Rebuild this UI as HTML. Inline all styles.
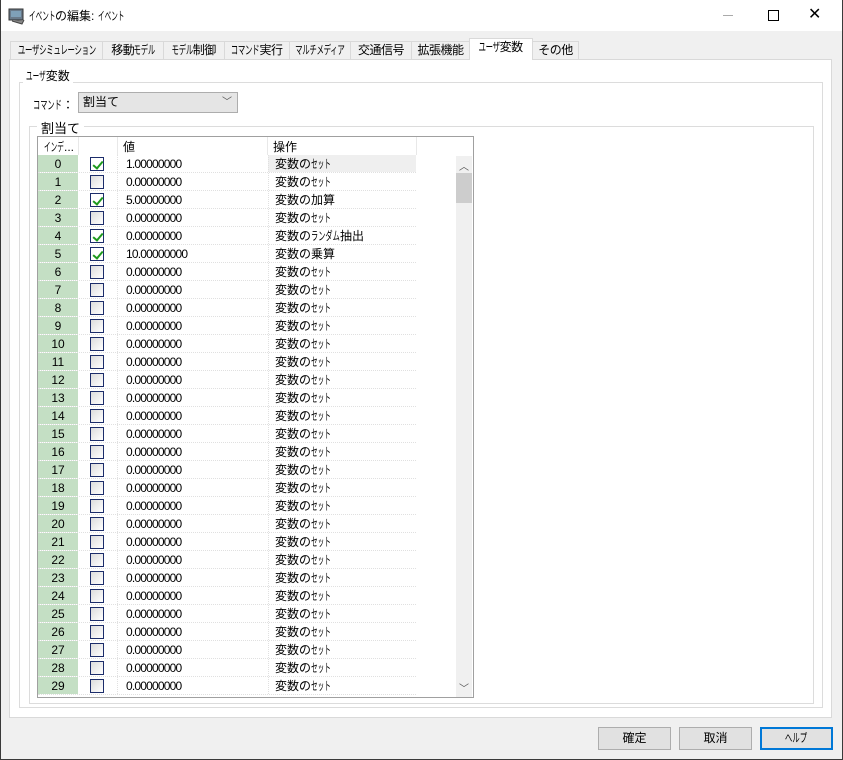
<!DOCTYPE html>
<html><head><meta charset="utf-8"><style>
*{margin:0;padding:0;box-sizing:border-box}
body{width:843px;height:760px;background:#f0f0f0;font-family:"Liberation Sans","Noto Sans CJK JP",sans-serif;font-size:12px;color:#000;position:relative;overflow:hidden}
.a{position:absolute}
#win{left:0;top:0;width:843px;height:760px;border:1px solid #3a3a3a;border-top:none}
#title{left:1px;top:0;width:841px;height:31px;background:#fff}
.tab{position:absolute;top:41px;height:19px;border:1px solid #d9d9d9;border-bottom:none;background:#f0f0f0;text-align:center;line-height:17px;font-size:12px;letter-spacing:-0.5px;white-space:nowrap}
.tab.sel{top:38px;height:22px;background:#fff;z-index:2}
.box{position:absolute;border:1px solid #dcdcdc}
.row{position:absolute;left:38px;width:378px;height:18px;border-bottom:1px dotted #e0e0e0}
.idx{position:absolute;left:0;top:0;width:40px;height:17px;background:#c4dfc4;text-align:center;line-height:19px}
.cb{position:absolute;left:52px;top:2px;width:14px;height:14px;border:1px solid #1c2d6b;background:linear-gradient(135deg,#dcdcdc,#fff)}
.cb.on{background:#fff}
.cb.on:after{content:"";position:absolute;left:4px;top:1px;width:4px;height:8px;border-right:2px solid #1e9a1e;border-bottom:2px solid #1e9a1e;transform:rotate(40deg)}
.val{position:absolute;left:88px;top:0;line-height:19px;letter-spacing:-0.8px}
.op{position:absolute;left:230px;top:0;width:148px;height:17px;line-height:19px;padding-left:6px;border-left:1px dotted #e0e0e0;white-space:nowrap}
.h{display:inline-block;transform:scaleX(.55);transform-origin:0 0;margin-right:-16px}
.h4{display:inline-block;transform:scaleX(.6);transform-origin:0 0;margin-right:-19px}
.vsep{position:absolute;top:0;height:17px;border-left:1px dotted #e0e0e0}
.btn{position:absolute;top:727px;width:73px;height:23px;border:1px solid #adadad;background:#e1e1e1;text-align:center;line-height:21px}
.sx{display:inline-block;transform:scaleX(.62);transform-origin:50% 0;white-space:nowrap}
</style></head><body>
<div class="a" id="win"></div>
<div class="a" id="title"></div>
<svg class="a" style="left:8px;top:7px" width="18" height="18"><rect x="1" y="2" width="14" height="11" fill="#6a7a8a" stroke="#333"/><rect x="3" y="4" width="10" height="6" fill="#7fa0b8"/><path d="M4 14 L14 17 L16 13" stroke="#444" fill="#888"/></svg>
<div class="a" style="left:29px;top:7px;font-size:12px;white-space:nowrap"><span style="display:inline-block;transform:scaleX(.55);transform-origin:0 0;margin-right:-22px">イベント</span>の編集: <span style="display:inline-block;transform:scaleX(.55);transform-origin:0 0">イベント</span></div>
<div class="a" style="left:723px;top:15px;width:10px;height:1px;background:#aaa"></div>
<div class="a" style="left:768px;top:10px;width:11px;height:11px;border:1px solid #000"></div>
<div class="a" style="left:808px;top:6px;font-size:16px;line-height:18px">✕</div>

<div class="tab" style="left:10px;width:93px"><span class="sx" style="margin:0 -30px">ユーザシミュレーション</span></div>
<div class="tab" style="left:102px;width:62px">移動<span class="sx" style="margin:0 -7px">モデル</span></div>
<div class="tab" style="left:163px;width:62px"><span class="sx" style="margin:0 -7px">モデル</span>制御</div>
<div class="tab" style="left:224px;width:66px"><span class="sx" style="margin:0 -9px">コマンド</span>実行</div>
<div class="tab" style="left:289px;width:62px"><span class="sx" style="margin:0 -20px">マルチメディア</span></div>
<div class="tab" style="left:350px;width:62px">交通信号</div>
<div class="tab" style="left:411px;width:59px">拡張機能</div>
<div class="tab sel" style="left:469px;width:64px"><span class="sx" style="margin:0 -7px">ユーザ</span>変数</div>
<div class="tab" style="left:532px;width:47px">その他</div>

<div class="box" style="left:9px;top:59px;width:823px;height:659px;background:#fff;border-color:#d9d9d9"></div>
<div class="box" style="left:19px;top:82px;width:804px;height:626px"></div>
<div class="a" style="left:23px;top:67px;background:#fff;padding:0 3px;white-space:nowrap"><span class="h">ユーザ</span>変数</div>
<div class="a" style="left:33px;top:96px;white-space:nowrap"><span class="h4">コマンド</span>：</div>
<div class="a" style="left:78px;top:92px;width:160px;height:21px;border:1px solid #adadad;background:#e5e5e5;padding-left:4px;line-height:19px">割当て<span style="position:absolute;right:5px;top:0;font-size:10px;color:#555">﹀</span></div>
<div class="box" style="left:29px;top:126px;width:785px;height:578px"></div>
<div class="a" style="left:37px;top:118px;background:#fff;padding:0 4px;font-size:13px">割当て</div>

<div class="a" style="left:37px;top:136px;width:437px;height:562px;border:1px solid #a0a0a0;background:#fff"></div>
<div class="a" style="left:38px;top:137px;width:378px;height:18px">
<div class="a" style="left:6px;top:1px;white-space:nowrap"><span class="h">インデ</span>...</div>
<div class="a" style="left:40px;top:0;height:18px;border-left:1px solid #e8e8e8"></div>
<div class="a" style="left:79px;top:0;height:18px;border-left:1px solid #e8e8e8"></div>
<div class="a" style="left:85px;top:1px">値</div>
<div class="a" style="left:229px;top:0;height:18px;border-left:1px solid #e8e8e8"></div>
<div class="a" style="left:235px;top:1px">操作</div>
<div class="a" style="left:378px;top:0;height:18px;border-left:1px solid #e8e8e8"></div>
</div>
<div class="a" style="left:456px;top:156px;width:16px;height:541px;background:#f0f0f0"></div>
<div class="a" style="left:456px;top:173px;width:16px;height:30px;background:#cdcdcd"></div>
<div class="a" style="left:459px;top:158px;font-size:10px;color:#555">︿</div>
<div class="a" style="left:459px;top:680px;font-size:10px;color:#555">﹀</div>

<div class="row" style="top:155px"><div class="idx">0</div><div class="vsep" style="left:79px"></div><div class="cb on"></div><div class="val">1.00000000</div><div class="op" style="background:#efefef">変数の<span class="h">セット</span></div></div>
<div class="row" style="top:173px"><div class="idx">1</div><div class="vsep" style="left:79px"></div><div class="cb"></div><div class="val">0.00000000</div><div class="op">変数の<span class="h">セット</span></div></div>
<div class="row" style="top:191px"><div class="idx">2</div><div class="vsep" style="left:79px"></div><div class="cb on"></div><div class="val">5.00000000</div><div class="op">変数の加算</div></div>
<div class="row" style="top:209px"><div class="idx">3</div><div class="vsep" style="left:79px"></div><div class="cb"></div><div class="val">0.00000000</div><div class="op">変数の<span class="h">セット</span></div></div>
<div class="row" style="top:227px"><div class="idx">4</div><div class="vsep" style="left:79px"></div><div class="cb on"></div><div class="val">0.00000000</div><div class="op">変数の<span class="h4">ランダム</span>抽出</div></div>
<div class="row" style="top:245px"><div class="idx">5</div><div class="vsep" style="left:79px"></div><div class="cb on"></div><div class="val">10.00000000</div><div class="op">変数の乗算</div></div>
<div class="row" style="top:263px"><div class="idx">6</div><div class="vsep" style="left:79px"></div><div class="cb"></div><div class="val">0.00000000</div><div class="op">変数の<span class="h">セット</span></div></div>
<div class="row" style="top:281px"><div class="idx">7</div><div class="vsep" style="left:79px"></div><div class="cb"></div><div class="val">0.00000000</div><div class="op">変数の<span class="h">セット</span></div></div>
<div class="row" style="top:299px"><div class="idx">8</div><div class="vsep" style="left:79px"></div><div class="cb"></div><div class="val">0.00000000</div><div class="op">変数の<span class="h">セット</span></div></div>
<div class="row" style="top:317px"><div class="idx">9</div><div class="vsep" style="left:79px"></div><div class="cb"></div><div class="val">0.00000000</div><div class="op">変数の<span class="h">セット</span></div></div>
<div class="row" style="top:335px"><div class="idx">10</div><div class="vsep" style="left:79px"></div><div class="cb"></div><div class="val">0.00000000</div><div class="op">変数の<span class="h">セット</span></div></div>
<div class="row" style="top:353px"><div class="idx">11</div><div class="vsep" style="left:79px"></div><div class="cb"></div><div class="val">0.00000000</div><div class="op">変数の<span class="h">セット</span></div></div>
<div class="row" style="top:371px"><div class="idx">12</div><div class="vsep" style="left:79px"></div><div class="cb"></div><div class="val">0.00000000</div><div class="op">変数の<span class="h">セット</span></div></div>
<div class="row" style="top:389px"><div class="idx">13</div><div class="vsep" style="left:79px"></div><div class="cb"></div><div class="val">0.00000000</div><div class="op">変数の<span class="h">セット</span></div></div>
<div class="row" style="top:407px"><div class="idx">14</div><div class="vsep" style="left:79px"></div><div class="cb"></div><div class="val">0.00000000</div><div class="op">変数の<span class="h">セット</span></div></div>
<div class="row" style="top:425px"><div class="idx">15</div><div class="vsep" style="left:79px"></div><div class="cb"></div><div class="val">0.00000000</div><div class="op">変数の<span class="h">セット</span></div></div>
<div class="row" style="top:443px"><div class="idx">16</div><div class="vsep" style="left:79px"></div><div class="cb"></div><div class="val">0.00000000</div><div class="op">変数の<span class="h">セット</span></div></div>
<div class="row" style="top:461px"><div class="idx">17</div><div class="vsep" style="left:79px"></div><div class="cb"></div><div class="val">0.00000000</div><div class="op">変数の<span class="h">セット</span></div></div>
<div class="row" style="top:479px"><div class="idx">18</div><div class="vsep" style="left:79px"></div><div class="cb"></div><div class="val">0.00000000</div><div class="op">変数の<span class="h">セット</span></div></div>
<div class="row" style="top:497px"><div class="idx">19</div><div class="vsep" style="left:79px"></div><div class="cb"></div><div class="val">0.00000000</div><div class="op">変数の<span class="h">セット</span></div></div>
<div class="row" style="top:515px"><div class="idx">20</div><div class="vsep" style="left:79px"></div><div class="cb"></div><div class="val">0.00000000</div><div class="op">変数の<span class="h">セット</span></div></div>
<div class="row" style="top:533px"><div class="idx">21</div><div class="vsep" style="left:79px"></div><div class="cb"></div><div class="val">0.00000000</div><div class="op">変数の<span class="h">セット</span></div></div>
<div class="row" style="top:551px"><div class="idx">22</div><div class="vsep" style="left:79px"></div><div class="cb"></div><div class="val">0.00000000</div><div class="op">変数の<span class="h">セット</span></div></div>
<div class="row" style="top:569px"><div class="idx">23</div><div class="vsep" style="left:79px"></div><div class="cb"></div><div class="val">0.00000000</div><div class="op">変数の<span class="h">セット</span></div></div>
<div class="row" style="top:587px"><div class="idx">24</div><div class="vsep" style="left:79px"></div><div class="cb"></div><div class="val">0.00000000</div><div class="op">変数の<span class="h">セット</span></div></div>
<div class="row" style="top:605px"><div class="idx">25</div><div class="vsep" style="left:79px"></div><div class="cb"></div><div class="val">0.00000000</div><div class="op">変数の<span class="h">セット</span></div></div>
<div class="row" style="top:623px"><div class="idx">26</div><div class="vsep" style="left:79px"></div><div class="cb"></div><div class="val">0.00000000</div><div class="op">変数の<span class="h">セット</span></div></div>
<div class="row" style="top:641px"><div class="idx">27</div><div class="vsep" style="left:79px"></div><div class="cb"></div><div class="val">0.00000000</div><div class="op">変数の<span class="h">セット</span></div></div>
<div class="row" style="top:659px"><div class="idx">28</div><div class="vsep" style="left:79px"></div><div class="cb"></div><div class="val">0.00000000</div><div class="op">変数の<span class="h">セット</span></div></div>
<div class="row" style="top:677px"><div class="idx">29</div><div class="vsep" style="left:79px"></div><div class="cb"></div><div class="val">0.00000000</div><div class="op">変数の<span class="h">セット</span></div></div>

<div class="btn" style="left:598px">確定</div>
<div class="btn" style="left:679px">取消</div>
<div class="btn" style="left:760px;border:2px solid #0078d7;line-height:19px"><span class="sx" style="margin:0 -7px">ヘルプ</span></div>
</body></html>
